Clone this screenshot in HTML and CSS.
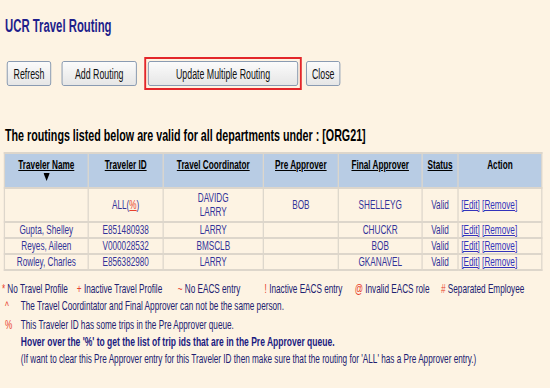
FILE: index.html
```html
<!DOCTYPE html>
<html lang="en">
<head>
    <meta charset="UTF-8">
    <title>UCR Travel Routing</title>
    <link rel="stylesheet" href="styles.css">
</head>
<body>
<div class="page">
    <h1 class="title">UCR Travel Routing</h1>

    <div class="toolbar">
        <button class="btn btn-refresh">Refresh</button>
        <button class="btn btn-add">Add Routing</button>
        <div class="highlight">
            <button class="btn btn-update">Update Multiple Routing</button>
        </div>
        <button class="btn btn-close">Close</button>
    </div>

    <h2 class="subtitle">The routings listed below are valid for all departments under : [ORG21]</h2>

    <table class="routing">
        <colgroup>
            <col class="c-name">
            <col class="c-id">
            <col class="c-coord">
            <col class="c-pre">
            <col class="c-final">
            <col class="c-status">
            <col class="c-action">
        </colgroup>
        <thead>
            <tr>
                <th>
                    <a href="#">Traveler Name</a>
                    <svg class="sort" width="10" height="8" viewBox="0 0 10 8"><path d="M0 0H10L5 8Z" fill="#000"/></svg>
                </th>
                <th><a href="#">Traveler ID</a></th>
                <th><a href="#">Travel Coordinator</a></th>
                <th><a href="#">Pre Approver</a></th>
                <th><a href="#">Final Approver</a></th>
                <th><a href="#">Status</a></th>
                <th>Action</th>
            </tr>
        </thead>
        <tbody>
            <tr class="row-all">
                <td></td>
                <td>ALL(<a class="pct" href="#">%</a>)</td>
                <td>DAVIDG<br>LARRY</td>
                <td>BOB</td>
                <td>SHELLEYG</td>
                <td>Valid</td>
                <td class="act"><a href="#">[Edit]</a> <a href="#">[Remove]</a></td>
            </tr>
            <tr>
                <td>Gupta, Shelley</td>
                <td>E851480938</td>
                <td>LARRY</td>
                <td></td>
                <td>CHUCKR</td>
                <td>Valid</td>
                <td class="act"><a href="#">[Edit]</a> <a href="#">[Remove]</a></td>
            </tr>
            <tr>
                <td>Reyes, Aileen</td>
                <td>V000028532</td>
                <td>BMSCLB</td>
                <td></td>
                <td>BOB</td>
                <td>Valid</td>
                <td class="act"><a href="#">[Edit]</a> <a href="#">[Remove]</a></td>
            </tr>
            <tr>
                <td>Rowley, Charles</td>
                <td>E856382980</td>
                <td>LARRY</td>
                <td></td>
                <td>GKANAVEL</td>
                <td>Valid</td>
                <td class="act"><a href="#">[Edit]</a> <a href="#">[Remove]</a></td>
            </tr>
        </tbody>
    </table>

    <div class="legend">
        <div class="legend-keys">
            <span class="key key-profile"><span class="sym">*</span> No Travel Profile</span>
            <span class="key key-inactive"><span class="sym">+</span> Inactive Travel Profile</span>
            <span class="key key-eacs"><span class="sym">~</span> No EACS entry</span>
            <span class="key key-ieacs"><span class="sym">!</span> Inactive EACS entry</span>
            <span class="key key-role"><span class="sym">@</span> Invalid EACS role</span>
            <span class="key key-sep"><span class="sym">#</span> Separated Employee</span>
        </div>
        <div class="note"><span class="sym mark">^</span>The Travel Coordintator and Final Approver can not be the same person.</div>
        <div class="note note-pct"><span class="sym mark">%</span>This Traveler ID has some trips in the Pre Approver queue.</div>
        <div class="note strong"><span class="mark"></span>Hover over the '%' to get the list of trip ids that are in the Pre Approver queue.</div>
        <div class="note"><span class="mark"></span>(If want to clear this Pre Approver entry for this Traveler ID then make sure that the routing for 'ALL' has a Pre Approver entry.)</div>
    </div>
</div>
</body>
</html>
```

FILE: styles.css
```css
/* Page */
html, body {
    margin: 0;
    padding: 0;
    background-color: #fdf3e3;
    overflow: hidden;
}

body {
    font-family: 'Liberation Sans', Arial, sans-serif;
    color: #202070;
}

/* the original capture is squeezed horizontally */
.page {
    width: 870px;
    padding: 16px 0 0 0;
    transform: scaleX(0.63);
    transform-origin: left top;
}

.title {
    margin: 0 0 0 8px;
    font-size: 18px;
    line-height: 20px;
    font-weight: bold;
    color: #1e1e8c;
}

/* Buttons */
.toolbar {
    display: flex;
    align-items: center;
    margin-top: 21px;
    padding-left: 11px;
    height: 33px;
}

.btn {
    height: 25px;
    padding: 0;
    font-family: 'Liberation Sans', Arial, sans-serif;
    font-size: 14px;
    color: #111;
    background: linear-gradient(#fbfbfb, #e6e6e6);
    border: 1px solid #6f86a6;
    border-radius: 3px;
}

.btn-refresh { width: 70px; }
.btn-add { width: 119px; margin-left: 17px; }
.btn-update { width: 238px; }
.btn-close { width: 54px; margin-left: 7px; }

.highlight {
    margin-left: 12px;
    padding: 2px 3px;
    border: 2px solid #e3262a;
    border-left-width: 3px;
    border-right-width: 3px;
    display: flex;
}

.subtitle {
    margin: 36px 0 6px 8px;
    font-size: 17px;
    line-height: 20px;
    font-weight: bold;
    color: #000;
}

/* Table */
.routing {
    margin-left: 6px;
    width: 854px;
    table-layout: fixed;
    border-collapse: collapse;
    font-size: 13px;
}

.c-name { width: 133px; }
.c-id { width: 119px; }
.c-coord { width: 159px; }
.c-pre { width: 119px; }
.c-final { width: 133px; }
.c-status { width: 57px; }
.c-action { width: 133px; }

.routing th,
.routing td {
    border: 2px solid #ddd6cb;
    text-align: center;
    padding: 0 2px;
}

.routing th {
    background-color: #b8cce4;
    color: #000;
    font-weight: bold;
    height: 30px;
    vertical-align: top;
    padding-top: 3px;
    line-height: 15px;
}

.routing th a {
    color: #000;
    text-decoration: underline;
}

.routing th .sort {
    display: block;
    margin: 1px auto 0;
}

.routing td {
    color: #333399;
    line-height: 14px;
    height: 14px;
}

.routing .row-all td {
    height: 32px;
}

.routing td a {
    color: #3333bb;
}

.routing td a.pct {
    color: #e8402a;
}

.routing td.act {
    text-align: left;
    padding-left: 4px;
}

/* Legend */
.legend {
    margin-top: 9px;
    font-size: 13px;
    line-height: 17px;
}

.legend-keys {
    display: flex;
    padding-left: 3px;
}

.key {
    white-space: nowrap;
    flex: none;
}

.key-profile { width: 119px; }
.key-inactive { width: 160px; }
.key-eacs { width: 138px; }
.key-ieacs { width: 143px; }
.key-role { width: 137px; }

.sym {
    color: #e8402a;
}

.note {
    display: flex;
}

.note-pct {
    margin-top: 2px;
}

.mark {
    width: 33px;
    padding-left: 8px;
    box-sizing: border-box;
    flex: none;
}

.strong {
    font-weight: bold;
    font-size: 13.5px;
    color: #1a1a80;
}
```
